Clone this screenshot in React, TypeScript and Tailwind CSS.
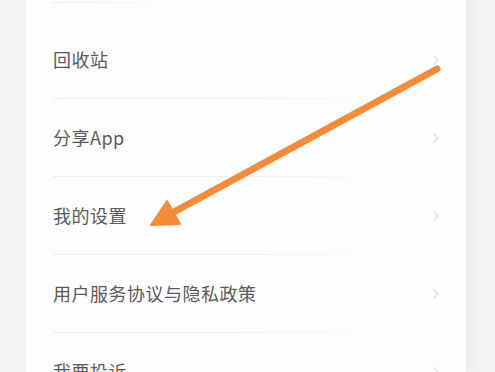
import { ChevronRight } from 'lucide-react';

const items = ['回收站', '分享App', '我的设置', '用户服务协议与隐私政策', '我要投诉'];

export default function App() {
    return (
        <div className="relative w-[495px] h-[372px] overflow-hidden bg-[#f3f3f3] flex" style={{ fontFamily: '"Noto Sans CJK SC", "Noto Sans", sans-serif' }}>
            <div className="ml-[26px] w-[440px] h-full bg-[#fdfdfd] shadow-[6px_0_8px_rgba(0,0,0,0.03)]">
                <div className="ml-[27px] w-[130px] mt-[2px] h-px bg-gradient-to-r from-[#ececec] to-transparent" />
                <div className="pt-[18px]">
                    {items.map((label) => (
                        <div key={label} className="pl-[27px] pr-[22px]">
                            <div className="h-[77px] flex items-center justify-between">
                                <span className="text-[18px] text-[#5a5a5a] tracking-[0.5px]">{label}</span>
                                <ChevronRight className="w-4 h-4 text-[#e8e8e8] blur-[0.6px]" strokeWidth={3} />
                            </div>
                            <div className="h-px w-[360px] bg-gradient-to-r from-[#ededed] via-[#f0f0f0] to-transparent" />
                        </div>
                    ))}
                </div>
            </div>

            <svg className="absolute inset-0 pointer-events-none" width="495" height="372" viewBox="0 0 495 372">
                <line x1="437" y1="69" x2="172" y2="213" stroke="#f58b38" strokeWidth="7" strokeLinecap="round" />
                <polygon points="151,225 167,201 180,224" fill="#f58b38" stroke="#f58b38" strokeWidth="2" strokeLinejoin="round" />
            </svg>
        </div>
    );
}
